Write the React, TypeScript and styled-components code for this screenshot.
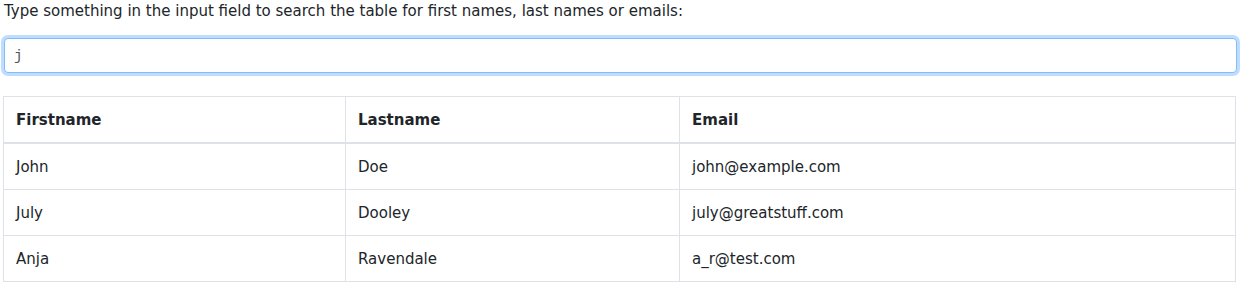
import React from "react";
import styled, { createGlobalStyle } from "styled-components";

const Global = createGlobalStyle`
  html, body { margin: 0; padding: 0; background: #fff; }
  body {
    font-family: Verdana, "DejaVu Sans", sans-serif;
    font-size: 15px;
    line-height: 21px;
    color: #212529;
  }
`;

const Page = styled.div`
  padding: 0 6px 0 3px;
`;

const Intro = styled.p`
  margin: 0 0 16px 1px;
  padding-top: 1px;
`;

const SearchInput = styled.input`
  display: block;
  box-sizing: border-box;
  width: 100%;
  height: 35px;
  margin: 0 0 0 1px;
  padding: 1px 9px 0;
  font-family: "Liberation Mono", monospace;
  font-size: 14px;
  color: #495057;
  border: 1px solid #80bdff;
  border-radius: 4px;
  box-shadow: 0 0 0 3px rgba(0, 123, 255, 0.25);
  outline: none;
  background: #fff;
`;

const Table = styled.table`
  width: 100%;
  margin-top: 23px;
  border-collapse: collapse;
  table-layout: fixed;
  border: 1px solid #dee2e6;
`;

const Th = styled.th<{ $w?: string }>`
  text-align: left;
  font-weight: bold;
  padding: 13px 12px 11px;
  border: 1px solid #dee2e6;
  border-bottom: 2px solid #dee2e6;
  width: ${(p) => p.$w || "auto"};
`;

const Td = styled.td`
  padding: 13px 12px 11px;
  border: 1px solid #dee2e6;
`;

const rows = [
  ["John", "Doe", "john@example.com"],
  ["July", "Dooley", "july@greatstuff.com"],
  ["Anja", "Ravendale", "a_r@test.com"],
];

export default function App() {
  return (
    <Page>
      <Global />
      <Intro>Type something in the input field to search the table for first names, last names or emails:</Intro>
      <SearchInput defaultValue="j" />
      <Table>
        <thead>
          <tr>
            <Th $w="317px">Firstname</Th>
            <Th $w="309px">Lastname</Th>
            <Th>Email</Th>
          </tr>
        </thead>
        <tbody>
          {rows.map((r) => (
            <tr key={r[0]}>
              {r.map((c) => (
                <Td key={c}>{c}</Td>
              ))}
            </tr>
          ))}
        </tbody>
      </Table>
    </Page>
  );
}
